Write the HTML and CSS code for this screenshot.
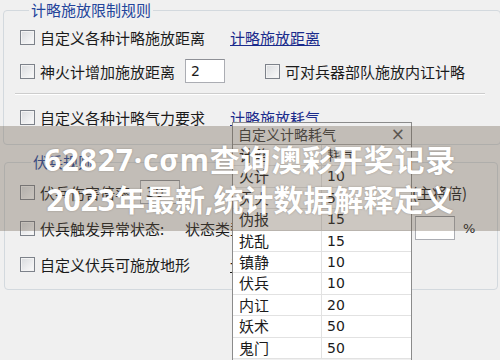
FILE: index.html
```html
<!doctype html>
<html>
<head>
<meta charset="UTF-8">
<title>计略施放限制规则</title>
<link rel="stylesheet" href="styles.css">
</head>
<body>
<div class="screen">
	<fieldset class="group group_first">
		<legend>计略施放限制规则</legend>
		<div class="row">
			<label class="opt opt_wide"><span class="check"></span>自定义各种计略施放距离</label>
			<a class="link">计略施放距离</a>
		</div>
		<div class="row">
			<label class="opt"><span class="check"></span>神火计增加施放距离</label>
			<span class="field">2</span>
			<label class="opt opt_right"><span class="check"></span>可对兵器部队施放内讧计略</label>
		</div>
		<hr class="sep">
		<div class="row">
			<label class="opt opt_wide"><span class="check"></span>自定义各种计略气力要求</label>
			<a class="link">计略施放耗气</a>
		</div>
	</fieldset>

	<fieldset class="group group_second">
		<legend>伏兵规则</legend>
		<div class="row">
			<label class="opt"><span class="check"></span>伏兵伤害倍率</label>
			<span class="field">30</span>
			<span class="note note_rate">(主将倍)</span>
		</div>
		<div class="row">
			<label class="opt opt_state"><span class="check"></span>伏兵触发异常状态:</label>
			<span class="state">状态类型</span>
			<span class="field field_pct"></span>
			<span class="note">%</span>
		</div>
		<div class="row">
			<label class="opt opt_wide"><span class="check"></span>自定义伏兵可施放地形</label>
			<a class="link link_plain">计略施放地形</a>
		</div>
	</fieldset>

	<!-- 자식 창: 计略耗气 -->
	<div class="dialog">
		<div class="dialog_title">
			<span>自定义计略耗气</span>
			<span class="close">×</span>
		</div>
		<ul class="cost_list">
			<li><span>计略</span><span>耗气</span></li>
			<li><span>火计</span><span>10</span></li>
			<li><span>灭火</span><span>5</span></li>
			<li><span>伪报</span><span>15</span></li>
			<li><span>扰乱</span><span>15</span></li>
			<li><span>镇静</span><span>10</span></li>
			<li><span>伏兵</span><span>10</span></li>
			<li><span>内讧</span><span>20</span></li>
			<li><span>妖术</span><span>50</span></li>
			<li><span>鬼门</span><span>50</span></li>
		</ul>
	</div>

	<div class="banner">
		<p class="banner_top">62827·cσm查询澳彩开奖记录</p>
		<p>2023年最新,统计数据解释定义</p>
	</div>
</div>
</body>
</html>
```

FILE: styles.css
```css
body {
	margin: 0;
	background: #f0f0f0;
	font-family: "Noto Sans CJK SC", "Noto Sans", sans-serif;
	font-size: 15px;
	color: #1b1b1b;
}
.screen {
	position: relative;
	width: 500px;
	height: 360px;
	overflow: hidden;
}

.group {
	margin: 0 3px;
	padding: 5px 15px 15px 16px;
	border: 1px solid #d3d9de;
	border-radius: 4px;
}
.group legend {
	margin-left: 9px;
	padding: 0 2px;
	line-height: 20px;
	color: #23449b;
}
.group_second {
	margin: 7px 2px 0 4px;
	padding: 8px 15px 13px 15px;
}
.group_second legend {
	margin-left: 11px;
}

.row {
	display: flex;
	align-items: center;
	height: 24px;
	margin-bottom: 10px;
	white-space: nowrap;
}
.row:last-child {
	margin-bottom: 0;
}
.group_second .row {
	margin-bottom: 12px;
}
.group_second .row:last-child {
	margin-bottom: 0;
}

.opt {
	display: flex;
	align-items: center;
	gap: 5px;
}
.opt_wide {
	width: 210px;
}
.opt_right {
	margin-left: 40px;
}
.opt_state {
	width: 165px;
}
.check {
	display: inline-block;
	width: 13px;
	height: 13px;
	border: 1px solid #7d828a;
	background: linear-gradient(135deg, #d9dbde, #fbfbfb);
	box-shadow: inset 0 0 0 1px #f3f3f3;
}
.field {
	display: inline-block;
	box-sizing: border-box;
	width: 40px;
	height: 24px;
	margin-left: 10px;
	padding: 1px 5px;
	border: 1px solid #abadb3;
	border-top-color: #8e9096;
	background: #fff;
	font-family: "DejaVu Sans", sans-serif;
	font-size: 14px;
	line-height: 20px;
}
.field_pct {
	margin-left: 170px;
}
.state {
	margin-left: 0;
}
.note {
	margin-left: 8px;
	font-family: "DejaVu Sans", sans-serif;
	font-size: 13px;
}
.note_rate {
	margin-left: 232px;
	font-family: "Noto Sans CJK SC", sans-serif;
	font-size: 15px;
}
.link {
	color: #1a2b8c;
	text-decoration: underline;
}
.link_plain {
	color: #1b1b1b;
}
.sep {
	margin: 10px 0 10px -5px;
	width: 470px;
	height: 0;
	border: 0;
	border-top: 1px solid #cdcdcd;
	border-bottom: 1px solid #fff;
}

.dialog {
	position: absolute;
	left: 232px;
	top: 122px;
	width: 178px;
	height: 250px;
	border: 1px solid #8b8b8b;
	background: #f0f0f0;
}
.dialog_title {
	display: flex;
	justify-content: space-between;
	align-items: center;
	height: 21px;
	padding: 0 6px 0 5px;
	font-size: 14px;
	color: #3a3a3a;
}
.close {
	font-family: "DejaVu Sans", sans-serif;
	font-size: 17px;
	color: #555;
}
.cost_list {
	margin: 0;
	padding: 0;
	list-style: none;
	background: #fff;
	border-top: 1px solid #a8a8a8;
}
.cost_list li {
	display: grid;
	grid-template-columns: 89px 1fr;
	height: 20.4px;
	border-bottom: 1px solid #e2e2e2;
	line-height: 20px;
}
.cost_list li span {
	padding-left: 6px;
}
.cost_list li span:first-child {
	border-right: 1px solid #e2e2e2;
}
.cost_list li span:last-child {
	padding-left: 5px;
	font-family: "DejaVu Sans", sans-serif;
	font-size: 14px;
}

.banner {
	position: absolute;
	left: 0;
	top: 126px;
	width: 500px;
	height: 105px;
	box-sizing: border-box;
	padding-top: 14px;
	background: rgba(105, 92, 72, 0.34);
	text-align: center;
}
.banner p {
	margin: 0;
	font-family: "Noto Sans", "Noto Sans CJK SC", sans-serif;
	font-size: 30px;
	font-weight: bold;
	line-height: 40px;
	color: #fff;
	text-shadow: 0 0 2px rgba(60, 50, 40, 0.35);
	white-space: nowrap;
}
.banner .banner_top {
	letter-spacing: 0.8px;
}
```
